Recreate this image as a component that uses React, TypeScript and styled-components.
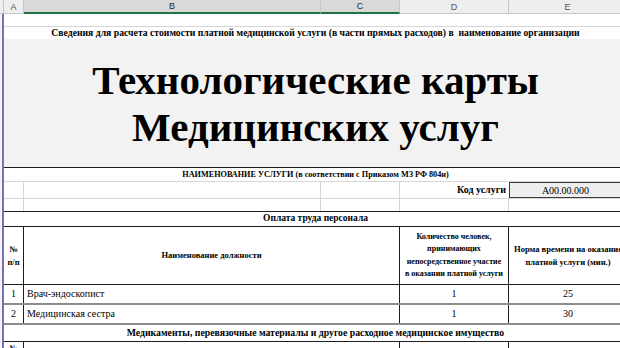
import styled, { createGlobalStyle } from "styled-components";

// Excel-like sheet: columns A..E, A starts after the 4px row-header stub
const COLS = "20px 297px 79px 109px 118px";
const GRID = "#d6d6d6";
const DARK = "#1e1e1e";

const GlobalStyle = createGlobalStyle`
  html, body {
    margin: 0;
    padding: 0;
    background: #ffffff;
    overflow: hidden;
  }
  * { box-sizing: border-box; }
`;

const Page = styled.div`
  width: 620px;
  height: 348px;
  overflow: hidden;
  background: #ffffff;
  font-family: "Liberation Serif", "Times New Roman", serif;
  color: #000;
`;

const HeaderBar = styled.div`
  display: grid;
  grid-template-columns: 4px ${COLS};
  height: 14px;
  font-family: "Liberation Sans", Arial, sans-serif;
  font-size: 9px;
  color: #444;
`;

const ColLetter = styled.div<{ $selected?: boolean }>`
  display: flex;
  align-items: center;
  justify-content: center;
  background: ${(p) => (p.$selected ? "#d9d9d9" : "#eeeeee")};
  border-right: 1px solid #c6c6c6;
  border-bottom: ${(p) => (p.$selected ? "2px solid #217346" : "1px solid #c6c6c6")};
  color: ${(p) => (p.$selected ? "#2a2a2a" : "#555")};
`;

const Body = styled.div`
  display: flex;
`;

const RowStub = styled.div`
  width: 4px;
  flex-shrink: 0;
  background: #f4f4f4;
  border-right: 2px solid #7a6fb6;
`;

const Sheet = styled.div`
  display: flex;
  flex-direction: column;
`;

const Row = styled.div<{ $h: number; $top?: string; $bg?: string }>`
  display: grid;
  grid-template-columns: ${COLS};
  height: ${(p) => p.$h}px;
  border-top: ${(p) => p.$top || "none"};
  background: ${(p) => p.$bg || "#ffffff"};
`;

const Cell = styled.div<{
  $span?: number;
  $align?: "left" | "center" | "right";
  $bold?: boolean;
  $size?: number;
  $line?: string;
}>`
  grid-column: span ${(p) => p.$span || 1};
  display: flex;
  align-items: center;
  justify-content: ${(p) =>
    p.$align === "left" ? "flex-start" : p.$align === "right" ? "flex-end" : "center"};
  text-align: ${(p) => p.$align || "center"};
  padding: 0 3px;
  font-size: ${(p) => p.$size || 10}px;
  font-weight: ${(p) => (p.$bold ? 700 : 400)};
  line-height: 1.2;
  border-right: ${(p) => p.$line || "none"};
  white-space: nowrap;
  overflow: hidden;
`;

const WrapCell = styled(Cell)`
  white-space: normal;
  line-height: 12.5px;
  padding: 0 4px;
`;

const NumHead = styled(Cell)`
  flex-direction: column;
  padding: 0;
  line-height: 12.5px;
`;

const Title = styled.div`
  grid-column: span 5;
  display: flex;
  flex-direction: column;
  align-items: center;
  justify-content: center;
  font-size: 41px;
  font-weight: 700;
  line-height: 47px;
  padding-top: 2px;
`;

const CodeBox = styled.div`
  display: flex;
  align-items: center;
  justify-content: center;
  background: #efefef;
  border: 1px solid #3a3a3a;
  border-right: none;
  font-size: 10px;
  padding-right: 6px;
`;

const NormHead = styled.div`
  display: flex;
  flex-direction: column;
  align-items: center;
  justify-content: center;
  font-size: 8.5px;
  font-weight: 700;
  line-height: 12.5px;
  white-space: nowrap;
  overflow: hidden;
`;

const letters = ["A", "B", "C", "D", "E"];

const staff = [
  { n: "1", name: "Врач-эндоскопист", count: "1", norm: "25" },
  { n: "2", name: "Медицинская сестра", count: "1", norm: "30" },
];

const App = () => {
  const dark = `1px solid ${DARK}`;
  const grid = `1px solid ${GRID}`;
  return (
    <Page>
      <GlobalStyle />
      <HeaderBar>
        <ColLetter />
        {letters.map((l) => (
          <ColLetter key={l} $selected={l === "B" || l === "C"}>
            {l}
          </ColLetter>
        ))}
      </HeaderBar>
      <Body>
        <RowStub />
        <Sheet>
          <Row $h={13} style={{ borderBottom: grid }} />
          <Row $h={12}>
            <Cell $span={5} $bold $size={9.7}>
              Сведения для расчета стоимости платной медицинской услуги (в части прямых расходов) в&nbsp;&nbsp;наименование организации
            </Cell>
          </Row>
          <Row $h={128} $bg="#f2f2f2">
            <Title>
              <span>Технологические карты</span>
              <span>Медицинских услуг</span>
            </Title>
          </Row>
          <Row $h={14} $top={dark}>
            <Cell $span={5} $bold $size={8.2}>
              НАИМЕНОВАНИЕ УСЛУГИ (в соответствии с Приказом МЗ РФ 804н)
            </Cell>
          </Row>
          <Row $h={17} $top={grid}>
            <Cell $line={grid} />
            <Cell $line={grid} />
            <Cell $line={grid} />
            <Cell $align="right" $bold $size={10}>
              Код услуги
            </Cell>
            <CodeBox>A00.00.000</CodeBox>
          </Row>
          <Row $h={13} $top={grid}>
            <Cell $line={grid} />
            <Cell $line={grid} />
            <Cell $line={grid} />
            <Cell $line={grid} />
            <Cell />
          </Row>
          <Row $h={15} $top={dark}>
            <Cell $span={5} $bold $size={9.5}>
              Оплата труда персонала
            </Cell>
          </Row>
          <Row $h={58} $top={dark}>
            <NumHead $line={dark} $bold $size={8.5}>
              <span>№</span>
              <span>п/п</span>
            </NumHead>
            <WrapCell $span={2} $line={dark} $bold $size={8.5}>
              Наименование должности
            </WrapCell>
            <WrapCell $line={dark} $bold $size={8}>
              Количество человек, принимающих непосредственное участие в оказании платной услуги
            </WrapCell>
            <NormHead>
              <span>Норма времени на оказание</span>
              <span>платной услуги (мин.)</span>
            </NormHead>
          </Row>
          {staff.map((s, i) => (
            <Row key={s.n} $h={i === 0 ? 19 : 20} $top={i === 0 ? dark : "2px solid #8c8c8c"}>
              <Cell $line={dark} $size={10}>
                {s.n}
              </Cell>
              <Cell $span={2} $line={dark} $align="left" $size={10}>
                {s.name}
              </Cell>
              <Cell $line={dark} $size={10}>
                {s.count}
              </Cell>
              <Cell $size={10}>{s.norm}</Cell>
            </Row>
          ))}
          <Row $h={18} $top="2px solid #8c8c8c">
            <Cell $span={5} $bold $size={9.75}>
              Медикаменты, перевязочные материалы и другое расходное медицинское имущество
            </Cell>
          </Row>
          <Row $h={20} $top={dark}>
            <Cell $line={dark} $bold $size={8.5} style={{ alignItems: "flex-start", paddingTop: 1 }}>
              №
            </Cell>
            <Cell $span={2} $line={dark} />
            <Cell $line={dark} />
            <Cell />
          </Row>
        </Sheet>
      </Body>
    </Page>
  );
};

export default App;
